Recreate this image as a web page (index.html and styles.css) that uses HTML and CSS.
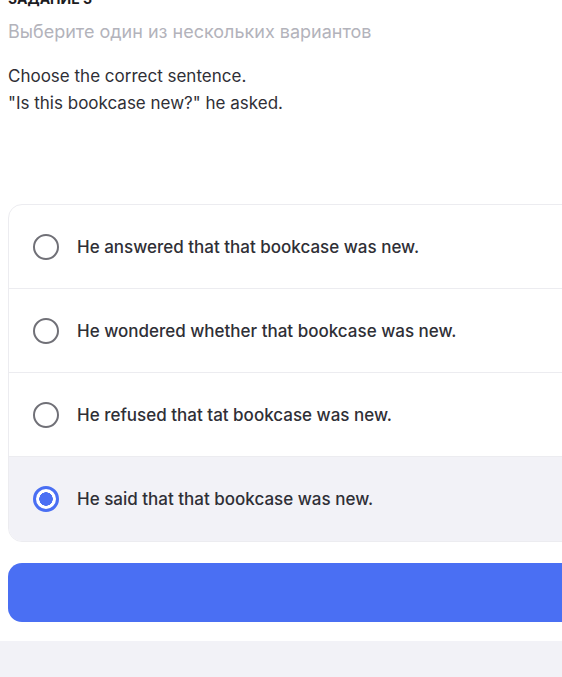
FILE: index.html
```html
<!DOCTYPE html>
<html lang="ru">

<head>
    <meta charset="UTF-8">
    <meta name="viewport" content="width=device-width, initial-scale=1.0">
    <title>Задание 3</title>
    <link rel="stylesheet" href="styles.css">
</head>

<body>
    <div class="page">
        <div class="task-label">Задание 3</div>
        <div class="task-hint">Выберите один из нескольких вариантов</div>

        <div class="question">
            <p>Choose the correct sentence.</p>
            <p>"Is this bookcase new?" he asked.</p>
        </div>

        <div class="options">
            <label class="option">
                <span class="radio"></span>
                <span class="option-text">He answered that that bookcase was new.</span>
            </label>
            <label class="option">
                <span class="radio"></span>
                <span class="option-text">He wondered whether that bookcase was new.</span>
            </label>
            <label class="option">
                <span class="radio"></span>
                <span class="option-text">He refused that tat bookcase was new.</span>
            </label>
            <label class="option selected">
                <span class="radio"></span>
                <span class="option-text">He said that that bookcase was new.</span>
            </label>
        </div>

        <button class="submit" type="button"></button>
    </div>

    <div class="footer"></div>
</body>

</html>
```

FILE: styles.css
```css
body {
    margin: 0;
    font-family: Inter, "Noto Sans", sans-serif;
    color: #2f2f36;
    background: #fff;
    overflow: hidden;
}

.page {
    width: 640px;
    padding: 0 0 0 8px;
    margin-top: -10px;
}

.task-label {
    font-size: 14px;
    font-weight: 700;
    text-transform: uppercase;
    line-height: 18px;
    color: #1c1c22;
}

.task-hint {
    margin-top: 12px;
    font-size: 18px;
    line-height: 24px;
    color: #b3b3bb;
}

.question {
    margin-top: 19px;
    font-size: 17px;
    line-height: 27px;
}

.question p {
    margin: 0;
}

.options {
    margin-top: 87px;
    border: 1px solid #ececf0;
    border-radius: 14px;
    overflow: hidden;
}

.option {
    display: flex;
    align-items: center;
    gap: 18px;
    height: 83px;
    padding-left: 24px;
    border-top: 1px solid #ececf0;
    font-size: 17px;
    font-weight: 500;
    cursor: pointer;
}

.option:first-child {
    border-top: none;
}

.option:last-child {
    height: 84px;
}

.option.selected {
    background: #f2f2f7;
}

.radio {
    width: 22px;
    height: 22px;
    border: 2px solid #707077;
    border-radius: 50%;
    flex-shrink: 0;
    box-sizing: content-box;
}

.option.selected .radio {
    border: 3px solid #4a6ff3;
    width: 20px;
    height: 20px;
    background: radial-gradient(circle, #4a6ff3 0 6.5px, #fff 7px);
}

.submit {
    display: block;
    width: 100%;
    height: 59px;
    margin-top: 21px;
    border: none;
    border-radius: 14px;
    background-color: #4a6ff3;
    cursor: pointer;
}

.footer {
    margin-top: 19px;
    height: 60px;
    background: #f2f2f7;
}
```
